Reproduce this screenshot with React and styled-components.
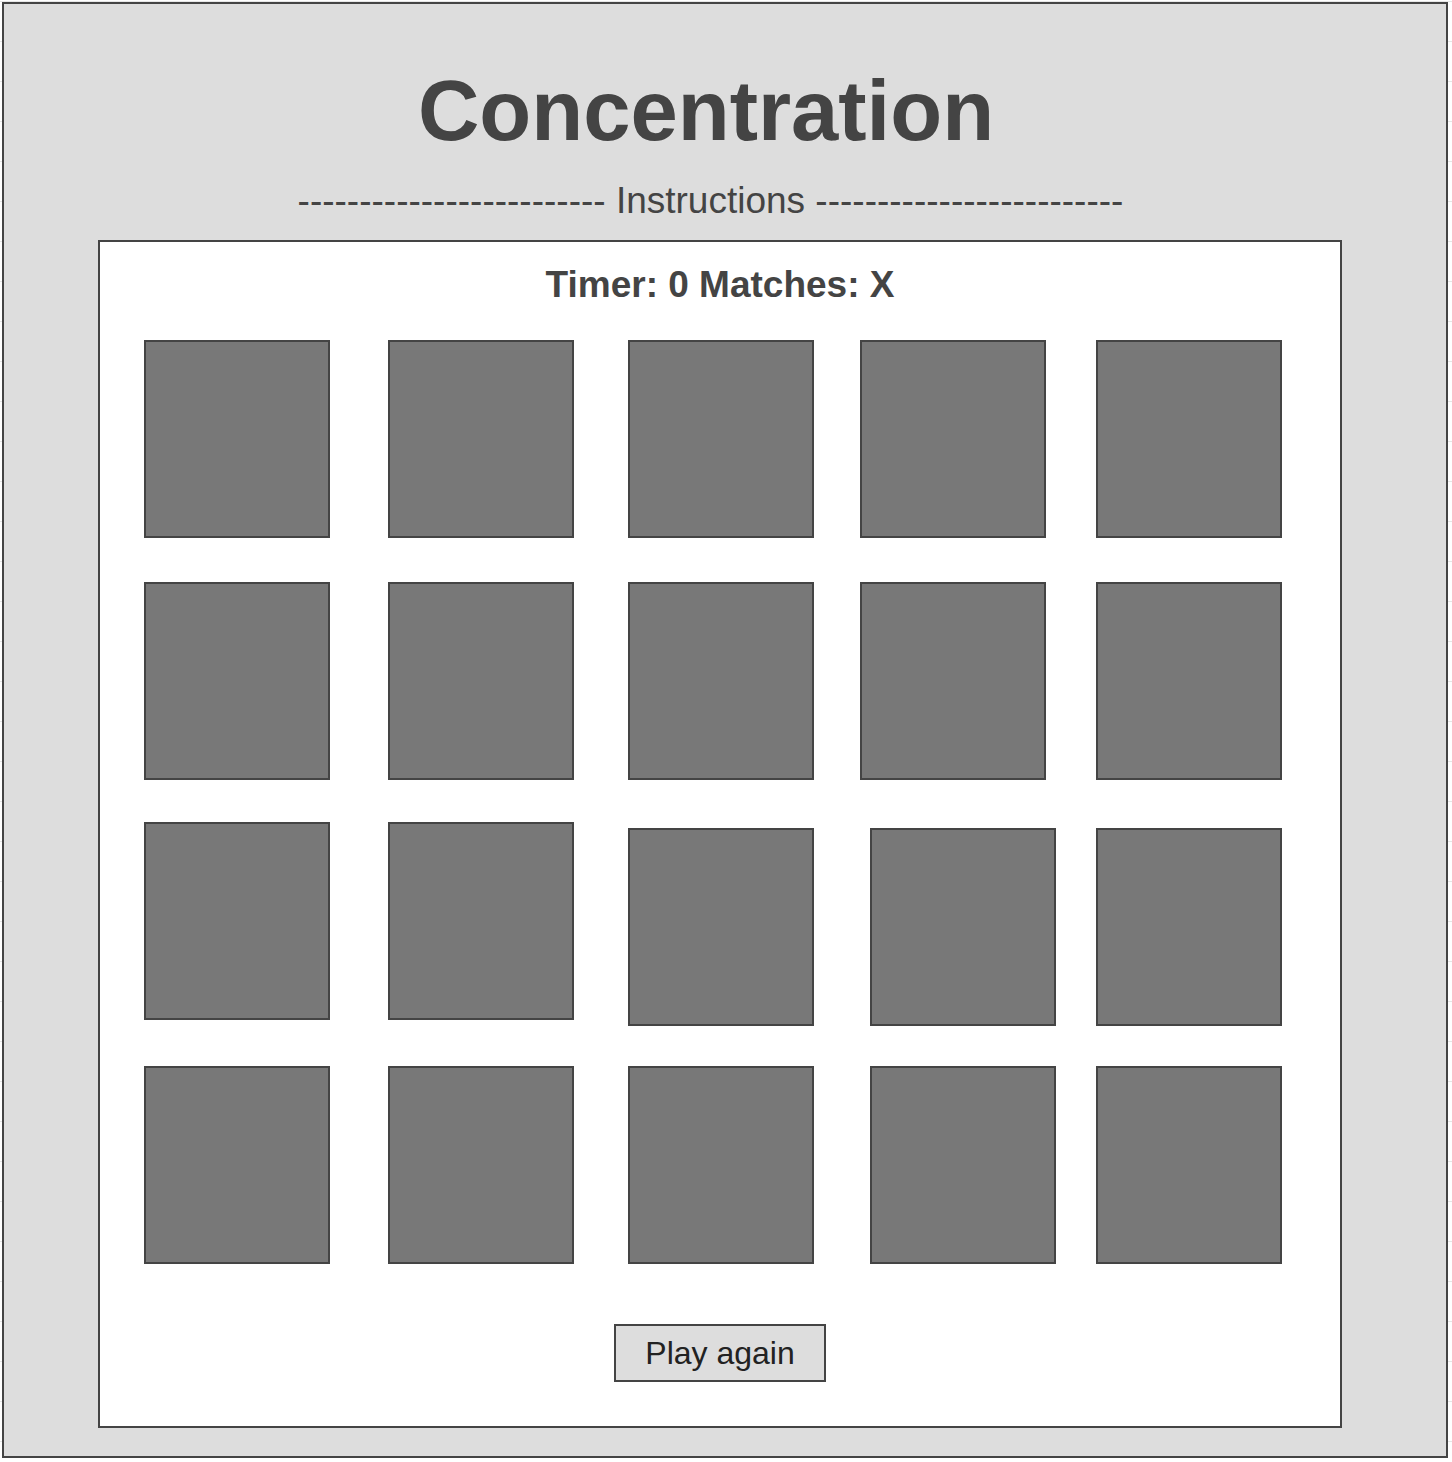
import styled, { createGlobalStyle } from 'styled-components';

const GlobalStyle = createGlobalStyle`
	html,
	body {
		margin: 0;
		padding: 0;
	}
	body {
		background-color: #ffffff;
		background-image: linear-gradient(
			to bottom,
			#e6e6e6 0,
			#e6e6e6 1px,
			transparent 1px,
			transparent 40px
		);
		background-size: 100% 40px;
		background-position: 0 1px;
		font-family: 'Liberation Sans', Arial, sans-serif;
	}
`;

const Frame = styled.div`
	margin: 2px;
	width: 1446px;
	height: 1456px;
	box-sizing: border-box;
	border: 2px solid #444;
	background-color: #dddddd;
	display: flex;
	flex-direction: column;
`;
const Title = styled.h1`
	margin: 64px 0 0;
	padding-right: 38px;
	font-size: 85px;
	line-height: 85px;
	font-weight: 700;
	color: #444;
	text-align: center;
`;
const Instructions = styled.div`
	margin-top: 29px;
	padding-right: 29px;
	font-size: 37px;
	line-height: 37px;
	color: #444;
	text-align: center;
	white-space: pre;
`;
const Panel = styled.div`
	margin: 21px 0 0 94px;
	width: 1244px;
	height: 1188px;
	box-sizing: border-box;
	border: 2px solid #444;
	background-color: #ffffff;
	display: flex;
	flex-direction: column;
	align-items: center;
	padding-top: 24px;
`;
const Status = styled.div`
	font-size: 37px;
	line-height: 37px;
	font-weight: 700;
	color: #444;
`;
const Board = styled.div`
	align-self: stretch;
	margin-top: 37px;
	padding-left: 44px;
	display: grid;
	grid-template-columns: 244px 240px 232px 236px 186px;
	grid-template-rows: 242px 240px 244px 198px;
	align-items: start;
	justify-items: start;
`;
const Card = styled.div`
	width: 186px;
	height: 198px;
	box-sizing: border-box;
	border: 2px solid #444;
	background-color: #787878;
	margin-left: ${(props) => props.$dx || 0}px;
	margin-top: ${(props) => props.$dy || 0}px;
	cursor: pointer;
`;
const Button = styled.button`
	margin-top: 60px;
	width: 212px;
	height: 58px;
	box-sizing: border-box;
	border: 2px solid #444;
	border-radius: 0;
	background-color: #dddddd;
	color: #222;
	font-family: 'Liberation Sans', Arial, sans-serif;
	font-size: 32px;
	padding: 0;
	cursor: pointer;
`;

// a few cards sit slightly off the grid in the mockup
const offsets = {
	12: { dy: 6 },
	13: { dx: 10, dy: 6 },
	14: { dy: 6 },
	18: { dx: 10 },
};

const dashes = '-'.repeat(25);

const App = () => {
	return (
		<>
			<GlobalStyle />
			<Frame>
				<Title>Concentration</Title>
				<Instructions>{`${dashes} Instructions ${dashes}`}</Instructions>
				<Panel>
					<Status>Timer: 0 Matches: X</Status>
					<Board>
						{Array.from({ length: 20 }, (_, i) => (
							<Card
								key={i}
								$dx={offsets[i]?.dx}
								$dy={offsets[i]?.dy}
							/>
						))}
					</Board>
					<Button>Play again</Button>
				</Panel>
			</Frame>
		</>
	);
};

export default App;
